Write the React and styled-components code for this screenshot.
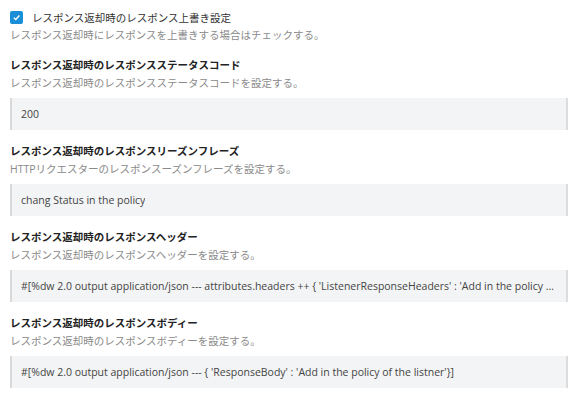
import React from 'react';
import styled, { createGlobalStyle } from 'styled-components';

const GlobalStyle = createGlobalStyle`
  body {
    margin: 0;
    background: #ffffff;
    font-family: "Open Sans", "Noto Sans CJK JP", sans-serif;
  }
`;

const Page = styled.div`
  width: 578px;
  padding: 8px 10px 0 10px;
  box-sizing: border-box;
`;

const CheckRow = styled.label`
  display: flex;
  align-items: center;
  gap: 9px;
  height: 18px;
  font-size: 10.5px;
  color: #333;
`;

const CheckBox = styled.span`
  width: 13px;
  height: 13px;
  border-radius: 2px;
  background: #1a8fd8;
  display: flex;
  align-items: center;
  justify-content: center;
`;

const Section = styled.div`
  margin-top: ${(p) => p.$top}px;
`;

const Title = styled.div`
  font-size: 10.5px;
  font-weight: 700;
  color: #222;
  line-height: 18px;
  height: 18px;
`;

const Desc = styled.div`
  font-size: 10.5px;
  color: #8a8a8a;
  line-height: 18px;
  height: 18px;
`;

const Field = styled.div`
  margin-top: 6px;
  height: 32px;
  background: #f3f4f5;
  border-left: 2px solid #d9d9d9;
  border-right: 2px solid #dcdcdc;
  box-sizing: border-box;
  padding: 0 6px 0 9px;
  display: flex;
  align-items: center;
  font-size: 10.5px;
  color: #444;
  white-space: nowrap;
  overflow: hidden;
`;

const FieldText = styled.span`
  overflow: hidden;
  text-overflow: ellipsis;
`;

const fields = [
  {
    title: 'レスポンス返却時のレスポンスステータスコード',
    desc: 'レスポンス返却時のレスポンスステータスコードを設定する。',
    value: '200',
  },
  {
    title: 'レスポンス返却時のレスポンスリーズンフレーズ',
    desc: 'HTTPリクエスターのレスポンスーズンフレーズを設定する。',
    value: 'chang Status in the policy',
  },
  {
    title: 'レスポンス返却時のレスポンスヘッダー',
    desc: 'レスポンス返却時のレスポンスヘッダーを設定する。',
    value:
      "#[%dw 2.0 output application/json --- attributes.headers ++ { 'ListenerResponseHeaders' : 'Add in the policy of the listner'}]",
  },
  {
    title: 'レスポンス返却時のレスポンスボディー',
    desc: 'レスポンス返却時のレスポンスボディーを設定する。',
    value: "#[%dw 2.0 output application/json --- { 'ResponseBody' : 'Add in the policy of the listner'}]",
  },
];

export default function App() {
  return (
    <>
      <GlobalStyle />
      <Page>
        <CheckRow>
          <CheckBox>
            <svg width="9" height="9" viewBox="0 0 10 10">
              <path d="M2 5.2 L4.2 7.3 L8.2 2.8" fill="none" stroke="#fff" strokeWidth="1.6" />
            </svg>
          </CheckBox>
          レスポンス返却時のレスポンス上書き設定
        </CheckRow>
        <Desc>レスポンス返却時にレスポンスを上書きする場合はチェックする。</Desc>
        {fields.map((f, i) => (
          <Section key={f.title} $top={i === 0 ? 12 : 12}>
            <Title>{f.title}</Title>
            <Desc>{f.desc}</Desc>
            <Field>
              <FieldText>{f.value}</FieldText>
            </Field>
          </Section>
        ))}
      </Page>
    </>
  );
}
